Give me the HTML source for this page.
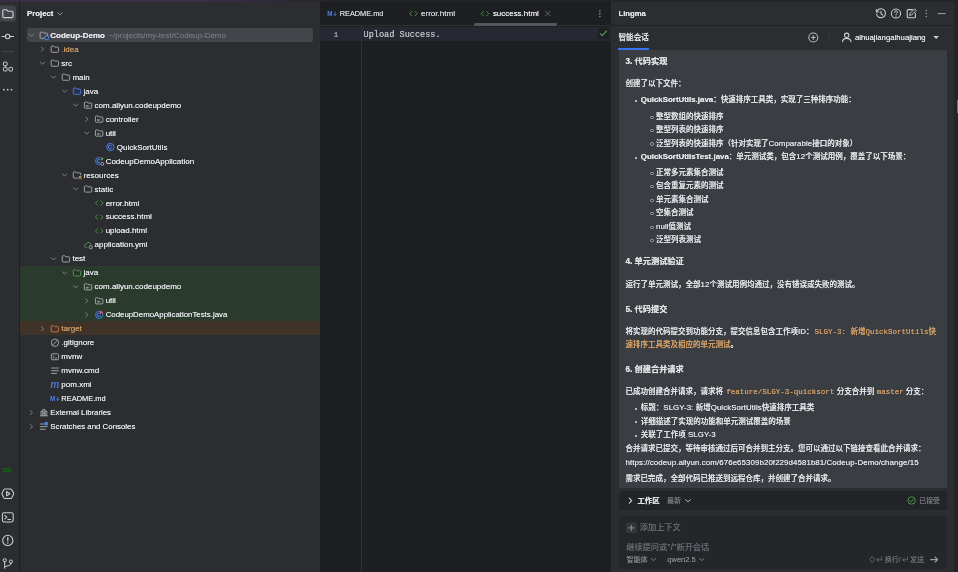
<!DOCTYPE html>
<html lang="zh">
<head>
<meta charset="utf-8">
<title>Codeup-Demo</title>
<style>
html,body{margin:0;padding:0;background:#2b2d30;}
body{width:958px;height:572px;position:relative;overflow:hidden;will-change:transform;font-family:"Liberation Sans","Noto Sans CJK SC",sans-serif;color:#dfe1e5;}
.abs{position:absolute;}
.tl{position:absolute;font-size:8px;line-height:14px;white-space:nowrap;text-shadow:0 0 0.5px currentColor;}
.tl.b{font-weight:bold;font-size:8px;}
.gr{color:#6f737a;font-weight:normal;}
.t{position:absolute;white-space:nowrap;line-height:12px;text-shadow:0 0 0.5px currentColor;}
.m{position:absolute;white-space:nowrap;font-size:7.5px;line-height:12px;color:#dfe1e5;font-weight:500;text-shadow:0 0 0.4px currentColor;}
.m b{font-weight:bold;}
.l{font-size:7.9px;letter-spacing:0.08px;}
b.l{letter-spacing:0;}
.code{font-family:"Liberation Mono","Noto Sans CJK SC",monospace;color:#d19c64;font-size:7.5px;}
.h{position:absolute;white-space:nowrap;font-size:8.2px;line-height:12px;font-weight:bold;color:#dfe1e5;text-shadow:0 0 0.4px currentColor;}
</style>
</head>
<body>
<!-- top strip -->
<div class="abs" style="left:0;top:0;width:958px;height:1.5px;background:linear-gradient(90deg,#3b2e49 0,#3b2e49 200px,#242529 330px,#232428 958px)"></div>

<!-- left tool strip border -->
<div class="abs" style="left:19px;top:1px;width:1px;height:571px;background:#1e1f22"></div>

<!-- project panel -->
<div class="abs" style="left:27px;top:28.3px;width:286px;height:13.8px;background:#43454a;border-radius:2px"></div>
<div class="abs" style="left:20px;top:265.5px;width:300px;height:56px;background:#2a3a2d"></div>
<div class="abs" style="left:20px;top:321.4px;width:300px;height:14.1px;background:#3e3326"></div>
<div class="t" style="left:27px;top:8px;font-size:7.8px;font-weight:bold;color:#dfe1e5">Project</div>

<!-- editor -->
<div class="abs" style="left:320px;top:1.5px;width:291px;height:571px;background:#1e1f22"></div>
<div class="abs" style="left:320px;top:25px;width:291px;height:1px;background:#2d2f33"></div>
<div class="abs" style="left:320px;top:26.8px;width:291px;height:13.9px;background:#272932"></div>
<div class="abs" style="left:597.6px;top:27.6px;width:12px;height:11.8px;background:#1f2023;border-radius:2px"></div>
<div class="abs" style="left:361px;top:26px;width:1px;height:546px;background:#2f3135"></div>
<div class="abs" style="left:473.7px;top:23.2px;width:83.5px;height:2.4px;background:#54575d;border-radius:1.2px"></div>
<div class="t" style="left:339.7px;top:8px;font-size:7.35px;color:#ced0d6">README.md</div>
<div class="t" style="left:421px;top:8px;font-size:8.05px;color:#ced0d6">error.html</div>
<div class="t" style="left:492.9px;top:8px;font-size:7.95px;color:#dfe1e5">success.html</div>
<div class="t" style="left:333.4px;top:28.8px;font-size:8px;color:#9da0a8;font-family:'Liberation Mono',monospace">1</div>
<div class="t" style="left:363.6px;top:29px;font-size:8.55px;color:#bcbec4;font-family:'Liberation Mono',monospace">Upload Success.</div>

<!-- lingma -->
<div class="abs" style="left:611px;top:1.5px;width:347px;height:571px;background:#2b2d30"></div>
<div class="abs" style="left:954px;top:1.5px;width:4px;height:571px;background:#242528"></div>
<div class="abs" style="left:611px;top:25px;width:343px;height:1px;background:#1f2023"></div>
<div class="abs" style="left:956.6px;top:100px;width:2px;height:13px;background:#3574f0"></div>
<div class="abs" style="left:618.4px;top:47.5px;width:30.4px;height:2px;background:#3574f0"></div>
<div class="abs" style="left:618.5px;top:49.6px;width:328.2px;height:438.7px;background:#3a3d42"></div>
<div class="t" style="left:618.5px;top:8px;font-size:7.7px;font-weight:bold;color:#dfe1e5">Lingma</div>
<div class="t" style="left:618.5px;top:32px;font-size:7.6px;font-weight:500;color:#dfe1e5">智能会话</div>
<div class="t" style="left:854.9px;top:31.8px;font-size:7.75px;color:#dfe1e5">aihuajiangaihuajiang</div>

<div class="h" style="left:625.5px;top:56.1px">3. 代码实现</div>
<div class="m" style="left:625.5px;top:78.0px">创建了以下文件：</div>
<div class="abs" style="left:635px;top:99.5px;width:2.4px;height:2.4px;border-radius:50%;background:#dfe1e5"></div>
<div class="m" style="left:640.8px;top:93.7px"><b class='l'>QuickSortUtils.java</b>：快速排序工具类，实现了三种排序功能：</div>
<div class="abs" style="left:650.3px;top:115.5px;width:1.4px;height:1.4px;border-radius:50%;border:0.6px solid #a4a7ad"></div>
<div class="m" style="left:656px;top:110.7px">整型数组的快速排序</div>
<div class="abs" style="left:650.3px;top:128.9px;width:1.4px;height:1.4px;border-radius:50%;border:0.6px solid #a4a7ad"></div>
<div class="m" style="left:656px;top:124.1px">整型列表的快速排序</div>
<div class="abs" style="left:650.3px;top:142.3px;width:1.4px;height:1.4px;border-radius:50%;border:0.6px solid #a4a7ad"></div>
<div class="m" style="left:656px;top:137.5px">泛型列表的快速排序（针对实现了<span class='l'>Comparable</span>接口的对象）</div>
<div class="abs" style="left:635px;top:156.8px;width:2.4px;height:2.4px;border-radius:50%;background:#dfe1e5"></div>
<div class="m" style="left:640.8px;top:151.0px"><b class='l'>QuickSortUtilsTest.java</b>：单元测试类，包含<span class='l'>12</span>个测试用例，覆盖了以下场景：</div>
<div class="abs" style="left:650.3px;top:171.6px;width:1.4px;height:1.4px;border-radius:50%;border:0.6px solid #a4a7ad"></div>
<div class="m" style="left:656px;top:166.8px">正常多元素集合测试</div>
<div class="abs" style="left:650.3px;top:185.1px;width:1.4px;height:1.4px;border-radius:50%;border:0.6px solid #a4a7ad"></div>
<div class="m" style="left:656px;top:180.3px">包含重复元素的测试</div>
<div class="abs" style="left:650.3px;top:198.6px;width:1.4px;height:1.4px;border-radius:50%;border:0.6px solid #a4a7ad"></div>
<div class="m" style="left:656px;top:193.8px">单元素集合测试</div>
<div class="abs" style="left:650.3px;top:212.1px;width:1.4px;height:1.4px;border-radius:50%;border:0.6px solid #a4a7ad"></div>
<div class="m" style="left:656px;top:207.3px">空集合测试</div>
<div class="abs" style="left:650.3px;top:225.6px;width:1.4px;height:1.4px;border-radius:50%;border:0.6px solid #a4a7ad"></div>
<div class="m" style="left:656px;top:220.8px"><span class='l'>null</span>值测试</div>
<div class="abs" style="left:650.3px;top:239.1px;width:1.4px;height:1.4px;border-radius:50%;border:0.6px solid #a4a7ad"></div>
<div class="m" style="left:656px;top:234.3px">泛型列表测试</div>
<div class="h" style="left:625.5px;top:256.4px">4. 单元测试验证</div>
<div class="m" style="left:625.5px;top:278.5px">运行了单元测试，全部<span class='l'>12</span>个测试用例均通过，没有错误或失败的测试。</div>
<div class="h" style="left:625.5px;top:303.7px">5. 代码提交</div>
<div class="m" style="left:625.5px;top:325.7px">将实现的代码提交到功能分支，提交信息包含工作项<span class="l">ID</span>：<span class="code" style="margin-left:1px">SLGY-3: 新增QuickSortUtils快</span></div>
<div class="m" style="left:625.5px;top:338.9px"><span class="code">速排序工具类及相应的单元测试</span>。</div>
<div class="h" style="left:625.5px;top:363.9px">6. 创建合并请求</div>
<div class="m" style="left:625.5px;top:385.9px">已成功创建合并请求，请求将 <span class="code" style="margin:0 0.4px 0 1.2px">feature/SLGY-3-quicksort</span> 分支合并到 <span class="code" style="margin-left:0.4px">master</span> 分支：</div>
<div class="abs" style="left:635px;top:407.5px;width:2.4px;height:2.4px;border-radius:50%;background:#dfe1e5"></div>
<div class="m" style="left:640.8px;top:401.7px">标题：<span class='l'>SLGY-3: </span>新增<span class='l'>QuickSortUtils</span>快速排序工具类</div>
<div class="abs" style="left:635px;top:421.0px;width:2.4px;height:2.4px;border-radius:50%;background:#dfe1e5"></div>
<div class="m" style="left:640.8px;top:415.9px">详细描述了实现的功能和单元测试覆盖的场景</div>
<div class="abs" style="left:635px;top:434.5px;width:2.4px;height:2.4px;border-radius:50%;background:#dfe1e5"></div>
<div class="m" style="left:640.8px;top:429.4px">关联了工作项 <span class='l'>SLGY-3</span></div>
<div class="m" style="left:625.5px;top:443.3px">合并请求已提交，等待审核通过后可合并到主分支。您可以通过以下链接查看此合并请求：</div>
<div class="m" style="left:625.5px;top:457.0px"><span class="l">https://codeup.aliyun.com/676e65309b20f229d4581b81/Codeup-Demo/change/15</span></div>
<div class="m" style="left:625.5px;top:473.1px">需求已完成，全部代码已推送到远程仓库，并创建了合并请求。</div>

<!-- workspace bar -->
<div class="abs" style="left:618.5px;top:490.6px;width:328px;height:19.2px;background:#222427;border-radius:4px 4px 0 0"></div>
<div class="t" style="left:637.4px;top:494.8px;font-size:7.4px;font-weight:bold;color:#dfe1e5">工作区</div>
<div class="t" style="left:667px;top:495px;font-size:7px;color:#74777e">最新</div>
<div class="t" style="left:919.3px;top:494.8px;font-size:6.9px;color:#72757c">已接受</div>

<!-- input box -->
<div class="abs" style="left:618.5px;top:516.2px;width:328px;height:52.6px;background:#242629;border-radius:4px"></div>
<div class="t" style="left:639.8px;top:522.2px;font-size:8.2px;color:#676a71">添加上下文</div>
<div class="t" style="left:626.2px;top:541.5px;font-size:8.2px;color:#676a71">继续提问或<span style="letter-spacing:0.3px;margin-left:0.3px">"/"</span>新开会话</div>
<div class="t" style="left:626.4px;top:553.9px;font-size:7.1px;color:#7f8289">智能体</div>
<div class="t" style="left:667.3px;top:553.6px;font-size:7.5px;color:#7f8289">qwen2.5</div>
<div class="t" style="left:884.7px;top:553.6px;font-size:7px;color:#696c73">换行/</div>
<div class="t" style="left:910px;top:553.6px;font-size:7px;color:#696c73">发送</div>

<!-- tree text -->
<span class="tl b" style="left:50.3px;top:28.75px;color:#dfe1e5">Codeup-Demo<span class="gr" style="margin-left:1.2px"> ~/projects/my-test/Codeup-Demo</span></span>
<span class="tl" style="left:61.37px;top:42.73px;color:#c99862">.idea</span>
<span class="tl" style="left:61.37px;top:56.71px;color:#dfe1e5">src</span>
<span class="tl" style="left:72.44px;top:70.69px;color:#dfe1e5">main</span>
<span class="tl" style="left:83.51px;top:84.67px;color:#dfe1e5">java</span>
<span class="tl" style="left:94.58px;top:98.65px;color:#dfe1e5">com.aliyun.codeupdemo</span>
<span class="tl" style="left:105.65px;top:112.63px;color:#dfe1e5">controller</span>
<span class="tl" style="left:105.65px;top:126.61px;color:#dfe1e5">util</span>
<span class="tl" style="left:116.72px;top:140.59px;color:#dfe1e5">QuickSortUtils</span>
<span class="tl" style="left:105.65px;top:154.57px;color:#dfe1e5">CodeupDemoApplication</span>
<span class="tl" style="left:83.51px;top:168.55px;color:#dfe1e5">resources</span>
<span class="tl" style="left:94.58px;top:182.53px;color:#dfe1e5">static</span>
<span class="tl" style="left:105.65px;top:196.51px;color:#dfe1e5">error.html</span>
<span class="tl" style="left:105.65px;top:210.49px;color:#dfe1e5">success.html</span>
<span class="tl" style="left:105.65px;top:224.47px;color:#dfe1e5">upload.html</span>
<span class="tl" style="left:94.58px;top:238.45px;color:#dfe1e5">application.yml</span>
<span class="tl" style="left:72.44px;top:252.43px;color:#dfe1e5">test</span>
<span class="tl" style="left:83.51px;top:266.41px;color:#dfe1e5">java</span>
<span class="tl" style="left:94.58px;top:280.39px;color:#dfe1e5">com.aliyun.codeupdemo</span>
<span class="tl" style="left:105.65px;top:294.37px;color:#dfe1e5">util</span>
<span class="tl" style="left:105.65px;top:308.35px;color:#dfe1e5;font-size:7.85px">CodeupDemoApplicationTests.java</span>
<span class="tl" style="left:61.37px;top:322.33px;color:#c99862">target</span>
<span class="tl" style="left:61.37px;top:336.31px;color:#dfe1e5">.gitignore</span>
<span class="tl" style="left:61.37px;top:350.29px;color:#dfe1e5">mvnw</span>
<span class="tl" style="left:61.37px;top:364.27px;color:#dfe1e5">mvnw.cmd</span>
<span class="tl" style="left:61.37px;top:378.25px;color:#dfe1e5">pom.xml</span>
<span class="tl" style="left:61.37px;top:392.23px;color:#dfe1e5;font-size:7.45px">README.md</span>
<span class="tl" style="left:50.3px;top:406.21px;color:#dfe1e5;font-size:7.8px">External Libraries</span>
<span class="tl" style="left:50.3px;top:420.19px;color:#dfe1e5;font-size:7.85px">Scratches and Consoles</span>

<!-- icons overlay -->
<svg class="abs" style="left:0;top:0" width="958" height="572" viewBox="0 0 958 572">
<path d="M29.3,34.15 L31.4,36.25 L33.5,34.15" fill="none" stroke="#8c9097" stroke-width="0.85" stroke-linecap="round" stroke-linejoin="round"/><path d="M40.1,32.9 q0,-0.8 0.8,-0.8 h1.8 l1,1 h3.0 q0.8,0 0.8,0.8 v3.6 q0,0.8 -0.8,0.8 h-5.8 q-0.8,0 -0.8,-0.8 z" fill="none" stroke="#a9acb3" stroke-width="0.9" stroke-linejoin="round"/><circle cx="46.7" cy="37.8" r="1.9" fill="#2b2d30" stroke="#4d7fe6" stroke-width="1.1"/>
<path d="M41.42,47.08 L43.52,49.18 L41.42,51.28" fill="none" stroke="#8c9097" stroke-width="0.85" stroke-linecap="round" stroke-linejoin="round"/><path d="M51.17,46.88 q0,-0.8 0.8,-0.8 h1.8 l1,1 h3.0 q0.8,0 0.8,0.8 v3.6 q0,0.8 -0.8,0.8 h-5.8 q-0.8,0 -0.8,-0.8 z" fill="none" stroke="#a9acb3" stroke-width="0.9" stroke-linejoin="round"/>
<path d="M40.37,62.11 L42.47,64.21 L44.57,62.11" fill="none" stroke="#8c9097" stroke-width="0.85" stroke-linecap="round" stroke-linejoin="round"/><path d="M51.17,60.86 q0,-0.8 0.8,-0.8 h1.8 l1,1 h3.0 q0.8,0 0.8,0.8 v3.6 q0,0.8 -0.8,0.8 h-5.8 q-0.8,0 -0.8,-0.8 z" fill="none" stroke="#a9acb3" stroke-width="0.9" stroke-linejoin="round"/>
<path d="M51.44,76.09 L53.54,78.19 L55.64,76.09" fill="none" stroke="#8c9097" stroke-width="0.85" stroke-linecap="round" stroke-linejoin="round"/><path d="M62.24,74.84 q0,-0.8 0.8,-0.8 h1.8 l1,1 h3.0 q0.8,0 0.8,0.8 v3.6 q0,0.8 -0.8,0.8 h-5.8 q-0.8,0 -0.8,-0.8 z" fill="none" stroke="#a9acb3" stroke-width="0.9" stroke-linejoin="round"/>
<path d="M62.51,90.07 L64.61,92.17 L66.71,90.07" fill="none" stroke="#8c9097" stroke-width="0.85" stroke-linecap="round" stroke-linejoin="round"/><path d="M73.31,88.82 q0,-0.8 0.8,-0.8 h1.8 l1,1 h3.0 q0.8,0 0.8,0.8 v3.6 q0,0.8 -0.8,0.8 h-5.8 q-0.8,0 -0.8,-0.8 z" fill="#25324d" stroke="#4d7fe6" stroke-width="0.9" stroke-linejoin="round"/>
<path d="M73.58,104.05 L75.68,106.15 L77.78,104.05" fill="none" stroke="#8c9097" stroke-width="0.85" stroke-linecap="round" stroke-linejoin="round"/><path d="M84.38,102.8 q0,-0.8 0.8,-0.8 h1.8 l1,1 h3.0 q0.8,0 0.8,0.8 v3.6 q0,0.8 -0.8,0.8 h-5.8 q-0.8,0 -0.8,-0.8 z" fill="none" stroke="#a9acb3" stroke-width="0.9" stroke-linejoin="round"/><circle cx="86.98" cy="106" r="0.9" fill="#a9acb3"/><path d="M87.98,106 h1.6" stroke="#a9acb3" stroke-width="0.7"/>
<path d="M85.7,116.98 L87.8,119.08 L85.7,121.18" fill="none" stroke="#8c9097" stroke-width="0.85" stroke-linecap="round" stroke-linejoin="round"/><path d="M95.45,116.78 q0,-0.8 0.8,-0.8 h1.8 l1,1 h3.0 q0.8,0 0.8,0.8 v3.6 q0,0.8 -0.8,0.8 h-5.8 q-0.8,0 -0.8,-0.8 z" fill="none" stroke="#a9acb3" stroke-width="0.9" stroke-linejoin="round"/><circle cx="98.05" cy="119.98" r="0.9" fill="#a9acb3"/><path d="M99.05,119.98 h1.6" stroke="#a9acb3" stroke-width="0.7"/>
<path d="M84.65,132.01 L86.75,134.11 L88.85,132.01" fill="none" stroke="#8c9097" stroke-width="0.85" stroke-linecap="round" stroke-linejoin="round"/><path d="M95.45,130.76 q0,-0.8 0.8,-0.8 h1.8 l1,1 h3.0 q0.8,0 0.8,0.8 v3.6 q0,0.8 -0.8,0.8 h-5.8 q-0.8,0 -0.8,-0.8 z" fill="none" stroke="#a9acb3" stroke-width="0.9" stroke-linejoin="round"/><circle cx="98.05" cy="133.96" r="0.9" fill="#a9acb3"/><path d="M99.05,133.96 h1.6" stroke="#a9acb3" stroke-width="0.7"/>
<circle cx="110.32" cy="147.04" r="3.7" fill="#25324d" stroke="#4d7fe6" stroke-width="0.9"/><path d="M111.52,145.84 a1.8,1.8 0 1 0 0,2.4" fill="none" stroke="#6a97f5" stroke-width="0.85" stroke-linecap="round"/>
<circle cx="99.25" cy="161.02" r="3.7" fill="#25324d" stroke="#4d7fe6" stroke-width="0.9"/><path d="M100.45,159.82 a1.8,1.8 0 1 0 0,2.4" fill="none" stroke="#6a97f5" stroke-width="0.85" stroke-linecap="round"/><rect x="100.05" y="156.42" width="5" height="9.6" fill="#2b2d30"/><path d="M100.85,156.72 l3.2,2 l-3.2,2z" fill="#57965c"/><circle cx="102.25" cy="163.92" r="1.5" fill="none" stroke="#a9acb3" stroke-width="0.9"/>
<path d="M62.51,173.95 L64.61,176.05 L66.71,173.95" fill="none" stroke="#8c9097" stroke-width="0.85" stroke-linecap="round" stroke-linejoin="round"/><path d="M73.31,172.7 q0,-0.8 0.8,-0.8 h1.8 l1,1 h3.0 q0.8,0 0.8,0.8 v3.6 q0,0.8 -0.8,0.8 h-5.8 q-0.8,0 -0.8,-0.8 z" fill="none" stroke="#a9acb3" stroke-width="0.9" stroke-linejoin="round"/><rect x="77.91" y="175.4" width="4.2" height="4.2" fill="#2b2d30"/><path d="M78.71,176.5h2.8 M78.71,177.6h2.8 M78.71,178.7h2.8" stroke="#c9a24e" stroke-width="0.8"/>
<path d="M73.58,187.93 L75.68,190.03 L77.78,187.93" fill="none" stroke="#8c9097" stroke-width="0.85" stroke-linecap="round" stroke-linejoin="round"/><path d="M84.38,186.68 q0,-0.8 0.8,-0.8 h1.8 l1,1 h3.0 q0.8,0 0.8,0.8 v3.6 q0,0.8 -0.8,0.8 h-5.8 q-0.8,0 -0.8,-0.8 z" fill="none" stroke="#a9acb3" stroke-width="0.9" stroke-linejoin="round"/>
<path d="M97.55,200.86 L95.45,202.96 L97.55,205.06 M100.95,200.86 L103.05,202.96 L100.95,205.06" fill="none" stroke="#4f9a4a" stroke-width="0.9" stroke-linecap="round" stroke-linejoin="round"/>
<path d="M97.55,214.84 L95.45,216.94 L97.55,219.04 M100.95,214.84 L103.05,216.94 L100.95,219.04" fill="none" stroke="#4f9a4a" stroke-width="0.9" stroke-linecap="round" stroke-linejoin="round"/>
<path d="M97.55,228.82 L95.45,230.92 L97.55,233.02 M100.95,228.82 L103.05,230.92 L100.95,233.02" fill="none" stroke="#4f9a4a" stroke-width="0.9" stroke-linecap="round" stroke-linejoin="round"/>
<path d="M86.98,247.3 h-1.2 q-1.8,-0.2 -1.4,-1.9 q0.4,-1.3 1.8,-1.2 q1,-2.3 3.2,-1.7 q1.5,0.5 1.6,2" fill="none" stroke="#57965c" stroke-width="0.9" stroke-linecap="round"/><circle cx="90.78" cy="247.2" r="1.6" fill="none" stroke="#a9acb3" stroke-width="0.9"/>
<path d="M51.44,257.83 L53.54,259.93 L55.64,257.83" fill="none" stroke="#8c9097" stroke-width="0.85" stroke-linecap="round" stroke-linejoin="round"/><path d="M62.24,256.58 q0,-0.8 0.8,-0.8 h1.8 l1,1 h3.0 q0.8,0 0.8,0.8 v3.6 q0,0.8 -0.8,0.8 h-5.8 q-0.8,0 -0.8,-0.8 z" fill="none" stroke="#a9acb3" stroke-width="0.9" stroke-linejoin="round"/>
<path d="M62.51,271.81 L64.61,273.91 L66.71,271.81" fill="none" stroke="#8c9097" stroke-width="0.85" stroke-linecap="round" stroke-linejoin="round"/><path d="M73.31,270.56 q0,-0.8 0.8,-0.8 h1.8 l1,1 h3.0 q0.8,0 0.8,0.8 v3.6 q0,0.8 -0.8,0.8 h-5.8 q-0.8,0 -0.8,-0.8 z" fill="#253627" stroke="#57965c" stroke-width="0.9" stroke-linejoin="round"/>
<path d="M73.58,285.79 L75.68,287.89 L77.78,285.79" fill="none" stroke="#8c9097" stroke-width="0.85" stroke-linecap="round" stroke-linejoin="round"/><path d="M84.38,284.54 q0,-0.8 0.8,-0.8 h1.8 l1,1 h3.0 q0.8,0 0.8,0.8 v3.6 q0,0.8 -0.8,0.8 h-5.8 q-0.8,0 -0.8,-0.8 z" fill="none" stroke="#a9acb3" stroke-width="0.9" stroke-linejoin="round"/><circle cx="86.98" cy="287.74" r="0.9" fill="#a9acb3"/><path d="M87.98,287.74 h1.6" stroke="#a9acb3" stroke-width="0.7"/>
<path d="M85.7,298.72 L87.8,300.82 L85.7,302.92" fill="none" stroke="#8c9097" stroke-width="0.85" stroke-linecap="round" stroke-linejoin="round"/><path d="M95.45,298.52 q0,-0.8 0.8,-0.8 h1.8 l1,1 h3.0 q0.8,0 0.8,0.8 v3.6 q0,0.8 -0.8,0.8 h-5.8 q-0.8,0 -0.8,-0.8 z" fill="none" stroke="#a9acb3" stroke-width="0.9" stroke-linejoin="round"/><circle cx="98.05" cy="301.72" r="0.9" fill="#a9acb3"/><path d="M99.05,301.72 h1.6" stroke="#a9acb3" stroke-width="0.7"/>
<path d="M85.7,312.7 L87.8,314.8 L85.7,316.9" fill="none" stroke="#8c9097" stroke-width="0.85" stroke-linecap="round" stroke-linejoin="round"/><circle cx="99.25" cy="314.8" r="3.7" fill="#25324d" stroke="#4d7fe6" stroke-width="0.9"/><path d="M100.45,313.6 a1.8,1.8 0 1 0 0,2.4" fill="none" stroke="#6a97f5" stroke-width="0.85" stroke-linecap="round"/><path d="M100.05,310.4 l3.4,1.8 l-3.4,1.8z" fill="#db5c5c"/>
<path d="M41.42,326.68 L43.52,328.78 L41.42,330.88" fill="none" stroke="#8c9097" stroke-width="0.85" stroke-linecap="round" stroke-linejoin="round"/><path d="M51.17,326.48 q0,-0.8 0.8,-0.8 h1.8 l1,1 h3.0 q0.8,0 0.8,0.8 v3.6 q0,0.8 -0.8,0.8 h-5.8 q-0.8,0 -0.8,-0.8 z" fill="#45322b" stroke="#c77d55" stroke-width="0.9" stroke-linejoin="round"/>
<circle cx="54.97" cy="342.76" r="3.7" fill="none" stroke="#a9acb3" stroke-width="0.9"/><path d="M52.37,345.36 L57.57,340.16" stroke="#a9acb3" stroke-width="0.9"/>
<rect x="51.37" y="353.74" width="7.2" height="6" rx="1" fill="none" stroke="#a9acb3" stroke-width="0.9"/><path d="M52.87,355.44 l1.3,1.3 l-1.3,1.3 M55.17,358.14 h1.8" fill="none" stroke="#a9acb3" stroke-width="0.8" stroke-linecap="round"/>
<path d="M51.57,368.02 h6.8 M51.57,370.72 h6.8 M51.57,373.42 h5" stroke="#a9acb3" stroke-width="0.9" stroke-linecap="round"/>
<text x="50.37" y="387.6" font-family="Liberation Serif, serif" font-style="italic" font-size="12.5" fill="#548af7">m</text>
<text x="50.07" y="400.88" font-family="Liberation Sans, sans-serif" font-weight="bold" font-size="6.3" fill="#4d7fe6">M</text><path d="M57.77,396.78 v3.6 M56.47,399.18 l1.3,1.3 l1.3,-1.3" fill="none" stroke="#4d7fe6" stroke-width="0.85"/>
<path d="M30.35,410.56 L32.45,412.66 L30.35,414.76" fill="none" stroke="#8c9097" stroke-width="0.85" stroke-linecap="round" stroke-linejoin="round"/><path d="M40.1,415.86 h7.6 M41,415.86 v-4.8 h1.9 v4.8 M42.9,415.86 v-6.4 h2 v6.4 M44.9,415.86 v-4.8 h1.9 v4.8" fill="none" stroke="#a9acb3" stroke-width="0.85" stroke-linejoin="round"/>
<path d="M30.35,424.54 L32.45,426.64 L30.35,428.74" fill="none" stroke="#8c9097" stroke-width="0.85" stroke-linecap="round" stroke-linejoin="round"/><path d="M40.3,424.04 h4 M40.3,426.64 h6.8 M40.3,429.24 h5" stroke="#a9acb3" stroke-width="0.9" stroke-linecap="round"/><circle cx="46.3" cy="423.64" r="1.9" fill="#4d7fe6"/>
<text x="327.3" y="15.9" font-family="Liberation Sans, sans-serif" font-weight="bold" font-size="6.3" fill="#4d7fe6">M</text><path d="M335,11.8 v3.6 M333.7,14.2 l1.3,1.3 l1.3,-1.3" fill="none" stroke="#4d7fe6" stroke-width="0.85"/><path d="M411.7,11.5 L409.6,13.6 L411.7,15.7 M415.1,11.5 L417.2,13.6 L415.1,15.7" fill="none" stroke="#4f9a4a" stroke-width="0.9" stroke-linecap="round" stroke-linejoin="round"/><path d="M483.4,11.5 L481.3,13.6 L483.4,15.7 M486.8,11.5 L488.9,13.6 L486.8,15.7" fill="none" stroke="#4f9a4a" stroke-width="0.9" stroke-linecap="round" stroke-linejoin="round"/>
<rect x="-3" y="5.4" width="19" height="16.2" rx="3" fill="#43454a"/>
<path d="M2.8,10.9 q0,-1.2 1.2,-1.2 h2.4 l1.5,1.5 h3.9 q1.2,0 1.2,1.2 v4 q0,1.2 -1.2,1.2 h-7.8 q-1.2,0 -1.2,-1.2 z" fill="none" stroke="#ced0d6" stroke-width="1.15" stroke-linejoin="round"/>
<path d="M2,36.5 h3.4 M9.9,36.5 h3.6" stroke="#ced0d6" stroke-width="1.1" stroke-linecap="round"/><circle cx="7.65" cy="36.5" r="2.2" fill="none" stroke="#ced0d6" stroke-width="1.1"/>
<path d="M1.5,51.5 h12.5" stroke="#43454a" stroke-width="1"/>
<rect x="3.5" y="62.1" width="3.6" height="3.6" rx="0.8" fill="none" stroke="#ced0d6" stroke-width="1"/>
<rect x="3.5" y="67.4" width="3.6" height="3.6" rx="0.8" fill="none" stroke="#ced0d6" stroke-width="1"/>
<rect x="8.9" y="67.4" width="3.6" height="3.6" rx="0.8" fill="none" stroke="#ced0d6" stroke-width="1"/>
<path d="M5.3,65.8 v1.6" stroke="#ced0d6" stroke-width="0.8"/>
<circle cx="3.9" cy="89.7" r="0.85" fill="#ced0d6"/>
<circle cx="7.7" cy="89.7" r="0.85" fill="#ced0d6"/>
<circle cx="11.5" cy="89.7" r="0.85" fill="#ced0d6"/>
<text x="2.6" y="471.7" font-family="Liberation Sans, sans-serif" font-weight="bold" font-size="5.2" fill="#0f7a12" textLength="9.8" lengthAdjust="spacingAndGlyphs">SQL</text>
<path d="M4.9,488.9 h5.8 q0.6,0 0.9,0.5 l2,3.7 q0.3,0.6 0,1.2 l-2,3.7 q-0.3,0.5 -0.9,0.5 h-5.8 q-0.6,0 -0.9,-0.5 l-2,-3.7 q-0.3,-0.6 0,-1.2 l2,-3.7 q0.3,-0.5 0.9,-0.5z" fill="none" stroke="#ced0d6" stroke-width="1.05" stroke-linejoin="round"/>
<path d="M6.6,491.5 l3.2,2.2 l-3.2,2.2z" fill="none" stroke="#ced0d6" stroke-width="1.05" stroke-linejoin="round"/>
<rect x="2.4" y="512.7" width="10.8" height="9.2" rx="1.6" fill="none" stroke="#ced0d6" stroke-width="1.05"/>
<path d="M4.8,515.3 l2,1.8 l-2,1.8 M7.8,519.4 h2.8" fill="none" stroke="#ced0d6" stroke-width="1.05" stroke-linecap="round" stroke-linejoin="round"/>
<circle cx="7.8" cy="540.4" r="5.1" fill="none" stroke="#ced0d6" stroke-width="1.05"/>
<path d="M7.8,537.4 v3.4" stroke="#ced0d6" stroke-width="1.2" stroke-linecap="round"/><circle cx="7.8" cy="543" r="0.7" fill="#ced0d6"/>
<circle cx="4.7" cy="560.2" r="1.6" fill="none" stroke="#ced0d6" stroke-width="1"/><circle cx="10.9" cy="561.6" r="1.6" fill="none" stroke="#ced0d6" stroke-width="1"/>
<path d="M4.7,561.8 v6.4 M10.9,563.2 q0,2.4 -2.6,2.6 q-3,0.2 -3.6,1.4" fill="none" stroke="#ced0d6" stroke-width="1" stroke-linecap="round"/>
<path d="M57.9,12.8 l2.2,2.1 l2.2,-2.1" fill="none" stroke="#9da0a8" stroke-width="0.9" stroke-linecap="round" stroke-linejoin="round"/>
<path d="M545.6,11.3 l4.4,4.4 M550,11.3 l-4.4,4.4" stroke="#70747b" stroke-width="0.8" stroke-linecap="round"/>
<circle cx="599.9" cy="11" r="0.75" fill="#9da0a8"/>
<circle cx="599.9" cy="13.7" r="0.75" fill="#9da0a8"/>
<circle cx="599.9" cy="16.4" r="0.75" fill="#9da0a8"/>
<path d="M600.2,33.6 l2,2 l4.2,-4.6" fill="none" stroke="#4f9e4f" stroke-width="1.15" stroke-linecap="round" stroke-linejoin="round"/>
<path d="M877.3,10.6 a4.5,4.5 0 1 1 -0.8,3.4" fill="none" stroke="#ced0d6" stroke-width="1.05" stroke-linecap="round"/>
<path d="M876.4,9.6 v2.4 h2.4" fill="none" stroke="#ced0d6" stroke-width="1.05" stroke-linecap="round" stroke-linejoin="round"/>
<path d="M881,11.2 v2.5 l1.7,1.5" fill="none" stroke="#ced0d6" stroke-width="1.05" stroke-linecap="round" stroke-linejoin="round"/>
<circle cx="896" cy="13.5" r="4.6" fill="none" stroke="#ced0d6" stroke-width="1.05"/>
<path d="M894.6,12.3 q0,-1.5 1.4,-1.5 q1.5,0 1.5,1.4 q0,0.9 -0.9,1.3 q-0.6,0.3 -0.6,1" fill="none" stroke="#ced0d6" stroke-width="0.9" stroke-linecap="round"/><circle cx="896" cy="16.1" r="0.6" fill="#ced0d6"/>
<path d="M912.4,9.6 h-4.2 q-1,0 -1,1 v6.2 q0,1 1,1 h6.2 q1,0 1,-1 v-3.6" fill="none" stroke="#ced0d6" stroke-width="1.05" stroke-linecap="round"/>
<path d="M909.6,15.4 l0.4,-2 l4.6,-4.6 l1.6,1.6 l-4.6,4.6z" fill="none" stroke="#ced0d6" stroke-width="0.9" stroke-linejoin="round"/>
<circle cx="926.3" cy="10.5" r="0.75" fill="#9da0a8"/>
<circle cx="926.3" cy="13.5" r="0.75" fill="#9da0a8"/>
<circle cx="926.3" cy="16.5" r="0.75" fill="#9da0a8"/>
<path d="M938,13.6 h7.2" stroke="#9da0a8" stroke-width="1" stroke-linecap="round"/>
<circle cx="813.3" cy="37.5" r="4.5" fill="none" stroke="#b9bcc3" stroke-width="1.05"/><path d="M811.4,37.5 h3.8 M813.3,35.6 v3.8" stroke="#b9bcc3" stroke-width="1.05" stroke-linecap="round"/>
<path d="M829.3,33.4 v8.4" stroke="#3c3e43" stroke-width="1"/>
<circle cx="846.7" cy="35.3" r="2.2" fill="none" stroke="#ced0d6" stroke-width="1.05"/><path d="M842.4,41.8 q0.4,-3.4 4.3,-3.4 q3.9,0 4.3,3.4" fill="none" stroke="#ced0d6" stroke-width="1.05" stroke-linecap="round"/>
<path d="M933.4,36 h5.6 l-2.8,3z" fill="#ced0d6"/>
<path d="M629.3,498.1 l2.4,2.5 l-2.4,2.5" fill="none" stroke="#ced0d6" stroke-width="1.1" stroke-linecap="round" stroke-linejoin="round"/>
<path d="M685.6,499.6 l2.4,2.2 l2.4,-2.2" fill="none" stroke="#b4b8bf" stroke-width="1" stroke-linecap="round" stroke-linejoin="round"/>
<circle cx="911.6" cy="500.5" r="3.7" fill="none" stroke="#4f9e4f" stroke-width="0.9"/><path d="M909.9,500.6 l1.2,1.2 l2.2,-2.4" fill="none" stroke="#4f9e4f" stroke-width="0.9" stroke-linecap="round" stroke-linejoin="round"/>
<rect x="625.9" y="522.4" width="10.9" height="10.9" rx="2" fill="#34363a"/><path d="M628.6,527.9 h5.4 M631.3,525.2 v5.4" stroke="#9a9da4" stroke-width="0.9" stroke-linecap="round"/>
<path d="M651.4,558.6 l2.1,2 l2.1,-2" fill="none" stroke="#8b8f97" stroke-width="0.9" stroke-linecap="round" stroke-linejoin="round"/>
<path d="M699.6,558.6 l2.1,2 l2.1,-2" fill="none" stroke="#8b8f97" stroke-width="0.9" stroke-linecap="round" stroke-linejoin="round"/>
<path d="M872.2,556.6 l2.6,2.9 l-2.6,2.9 l-2.6,-2.9z" fill="none" stroke="#6f737a" stroke-width="0.8" stroke-linejoin="round"/>
<path d="M881.6,557 v2.8 h-4.6 M878.6,558.2 l-1.7,1.6 l1.7,1.6" fill="none" stroke="#6f737a" stroke-width="0.8" stroke-linecap="round" stroke-linejoin="round"/>
<path d="M907.4,557 v2.8 h-4.6 M904.4,558.2 l-1.7,1.6 l1.7,1.6" fill="none" stroke="#6f737a" stroke-width="0.8" stroke-linecap="round" stroke-linejoin="round"/>
<path d="M930.6,559.6 h7 M935,557 l2.7,2.6 l-2.7,2.6" fill="none" stroke="#9da0a8" stroke-width="1.05" stroke-linecap="round" stroke-linejoin="round"/>
</svg>
</body>
</html>
